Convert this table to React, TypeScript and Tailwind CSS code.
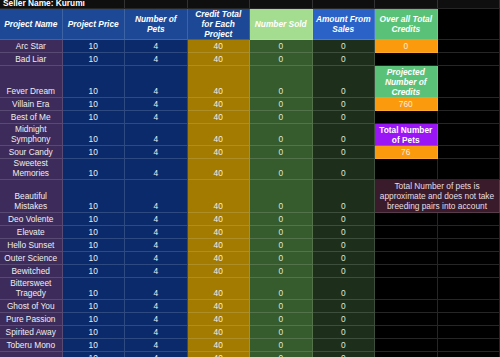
import type { ReactNode } from 'react';

interface Project {
	name: string;
	height: string;
}

const projects: Project[] = [
	{ name: 'Arc Star', height: 'h-[13px]' },
	{ name: 'Bad Liar', height: 'h-[13px]' },
	{ name: 'Fever Dream', height: 'h-[32px]' },
	{ name: 'Villain Era', height: 'h-[13px]' },
	{ name: 'Best of Me', height: 'h-[13px]' },
	{ name: 'Midnight Symphony', height: 'h-[22px]' },
	{ name: 'Sour Candy', height: 'h-[13px]' },
	{ name: 'Sweetest Memories', height: 'h-[21px]' },
	{ name: 'Beautiful Mistakes', height: 'h-[33px]' },
	{ name: 'Deo Volente', height: 'h-[13px]' },
	{ name: 'Elevate', height: 'h-[13px]' },
	{ name: 'Hello Sunset', height: 'h-[13px]' },
	{ name: 'Outer Science', height: 'h-[13px]' },
	{ name: 'Bewitched', height: 'h-[13px]' },
	{ name: 'Bittersweet Tragedy', height: 'h-[22px]' },
	{ name: 'Ghost of You', height: 'h-[13px]' },
	{ name: 'Pure Passion', height: 'h-[13px]' },
	{ name: 'Spirited Away', height: 'h-[13px]' },
	{ name: 'Toberu Mono', height: 'h-[13px]' },
	{ name: '', height: 'h-[13px]' },
];

const cellBase =
	'flex shrink-0 justify-center text-center border-r border-b border-white/15 px-[2px] leading-[10px]';

const Cell = ({
	className,
	children,
	wide,
	middle,
}: {
	className: string;
	children?: ReactNode;
	wide?: boolean;
	middle?: boolean;
}) => (
	<div
		className={`${cellBase} ${wide ? 'w-[125px]' : 'w-[62.5px]'} ${
			middle ? 'items-center' : 'items-end pb-[1px]'
		} ${className}`}
	>
		{children}
	</div>
);

const SideCells = ({ index }: { index: number }) => {
	if (index === 0 || index === 3 || index === 6) {
		const value = index === 0 ? '0' : index === 3 ? '760' : '76';
		return (
			<>
				<Cell className="bg-[#fa9a0c] text-[#fdeede]">{value}</Cell>
				<Cell className="bg-black" />
			</>
		);
	}
	if (index === 2) {
		return (
			<>
				<Cell middle className="bg-[#5ac278] text-white font-bold italic">
					Projected
					<br />
					Number of
					<br />
					Credits
				</Cell>
				<Cell className="bg-black" />
			</>
		);
	}
	if (index === 5) {
		return (
			<>
				<Cell middle className="bg-[#9a16f6] text-white font-bold">
					Total Number
					<br />
					of Pets
				</Cell>
				<Cell className="bg-black" />
			</>
		);
	}
	if (index === 8) {
		return (
			<Cell wide middle className="bg-[#3a1b2c] text-[#e6dfe2]">
				Total Number of pets is
				<br />
				approximate and does not take
				<br />
				breeding pairs into account
			</Cell>
		);
	}
	return (
		<>
			<Cell className="bg-black" />
			<Cell className="bg-black" />
		</>
	);
};

const App = () => {
	return (
		<div className="w-[500px] h-[357px] overflow-hidden bg-black font-['Liberation_Sans',Arial,sans-serif] text-[8.33px] text-[#eeeeee]">
			<div className="flex h-[13px] -mt-[5px] bg-[#0f0f0f]">
				<div className="flex items-end w-[125px] shrink-0 border-r border-white/15 px-[3px] font-bold text-white whitespace-nowrap leading-[10px]">
					Seller Name: Kurumi
				</div>
				<Cell className="bg-[#0f0f0f] border-b-0" />
				<Cell className="bg-[#0f0f0f] border-b-0" />
				<Cell className="bg-[#0f0f0f] border-b-0" />
				<Cell className="bg-[#0f0f0f] border-b-0" />
				<Cell className="bg-[#0f0f0f] border-b-0" />
				<Cell className="bg-[#0f0f0f] border-b-0" />
			</div>

			<div className="flex h-[32px] font-bold italic text-white border-t border-white/15">
				<Cell middle className="bg-[#1c4896]">
					Project Name
				</Cell>
				<Cell middle className="bg-[#1c4896]">
					Project Price
				</Cell>
				<Cell middle className="bg-[#1c4896]">
					Number of
					<br />
					Pets
				</Cell>
				<Cell middle className="bg-[#1c4896]">
					Credit Total
					<br />
					for Each
					<br />
					Project
				</Cell>
				<Cell middle className="bg-[#a4dc90]">
					Number Sold
				</Cell>
				<Cell middle className="bg-[#2b62c8]">
					Amount From
					<br />
					Sales
				</Cell>
				<Cell middle className="bg-[#5ac278]">
					Over all Total
					<br />
					Credits
				</Cell>
				<Cell className="bg-black" />
			</div>

			{projects.map((project, index) => (
				<div key={index} className={`flex ${project.height}`}>
					<Cell className="bg-[#3d2b5b]">{project.name}</Cell>
					<Cell className="bg-[#0b2a6b]">10</Cell>
					<Cell className="bg-[#0b2a6b]">4</Cell>
					<Cell className="bg-[#a27b00]">40</Cell>
					<Cell className="bg-[#365b2c] text-[#dfe8da]">0</Cell>
					<Cell className="bg-[#1d2f1a] text-[#dfe8da]">0</Cell>
					<SideCells index={index} />
				</div>
			))}
		</div>
	);
};

export default App;
